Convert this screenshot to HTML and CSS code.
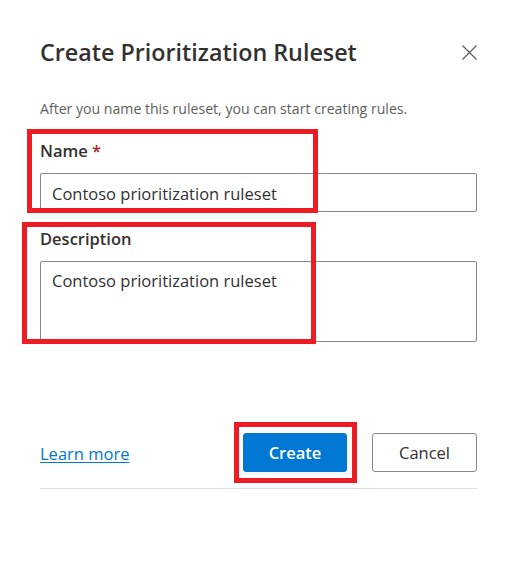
FILE: index.html
```html
<!DOCTYPE html>
<html lang="en">
<head>
<meta charset="utf-8">
<title>Create Prioritization Ruleset</title>
<link rel="stylesheet" href="styles.css">
</head>
<body>
<div class="dialog">
  <div class="head">
    <h1 class="title">Create Prioritization Ruleset</h1>
    <button class="close" aria-label="Close">
      <svg width="15" height="15" viewBox="0 0 15 15"><path d="M0.5 0.5 L14.5 14.5 M14.5 0.5 L0.5 14.5" stroke="#605e5c" stroke-width="1.3" fill="none"/></svg>
    </button>
  </div>
  <p class="sub">After you name this ruleset, you can start creating rules.</p>
  <div class="field">
    <div class="label">Name <span class="req">*</span></div>
    <div class="input">Contoso prioritization ruleset</div>
  </div>
  <div class="field field-desc">
    <div class="label">Description</div>
    <div class="input textarea">Contoso prioritization ruleset</div>
  </div>
  <div class="footer">
    <a class="link" href="#">Learn more</a>
    <div class="btns">
      <button class="btn primary">Create</button>
      <button class="btn secondary">Cancel</button>
    </div>
  </div>
  <div class="divider"></div>

  <div class="mark mark-name"></div>
  <div class="mark mark-desc"></div>
  <div class="mark mark-create"></div>
</div>
</body>
</html>
```

FILE: styles.css
```css
html, body {
  margin: 0;
  padding: 0;
  background: #ffffff;
}
body {
  font-family: "Open Sans", "Noto Sans", sans-serif;
  color: #323130;
}
.dialog {
  position: relative;
  width: 517px;
  min-height: 575px;
  box-sizing: border-box;
  padding: 33px 40px 0 40px;
}
.head {
  display: flex;
  align-items: center;
  justify-content: space-between;
  height: 38px;
}
.title {
  margin: 0;
  font-size: 23.3px;
  font-weight: 600;
  line-height: 38px;
  color: #323130;
}
.close {
  border: 0;
  background: none;
  padding: 0;
  width: 15px;
  height: 15px;
  display: flex;
}
.sub {
  margin: 28px 0 0 0;
  font-size: 14.1px;
  line-height: 20px;
  color: #605e5c;
}
.field {
  display: flex;
  flex-direction: column;
}
.label {
  font-size: 16.5px;
  font-weight: 600;
  line-height: 24px;
  margin-top: 20px;
  margin-bottom: 10px;
  color: #323130;
}
.field-desc .label {
  margin-top: 15px;
}
.req {
  color: #a4262c;
}
.input {
  height: 39px;
  box-sizing: border-box;
  border: 1px solid #8a8886;
  border-radius: 2px;
  padding: 2px 11px 0 11px;
  font-size: 16.5px;
  line-height: 35px;
  color: #323130;
}
.textarea {
  height: 81px;
  line-height: 24px;
  padding-top: 7px;
}
.footer {
  display: flex;
  align-items: center;
  justify-content: space-between;
  margin-top: 91px;
}
.link {
  font-size: 16.5px;
  color: #0078d4;
  text-decoration: underline;
  text-underline-offset: 2px;
  padding-top: 2px;
}
.btns {
  display: flex;
  gap: 25px;
}
.btn {
  height: 39px;
  box-sizing: border-box;
  font-family: inherit;
  font-size: 16.5px;
  font-weight: 600;
  border-radius: 3px;
  padding: 0 10px;
}
.primary {
  width: 104px;
  background: #0078d4;
  border: 1px solid #0078d4;
  color: #ffffff;
}
.secondary {
  width: 105px;
  background: #ffffff;
  border: 1px solid #8a8886;
  color: #323130;
  font-weight: 400;
}
.divider {
  margin-top: 16px;
  height: 1px;
  background: #e1dfdd;
}
.mark {
  position: absolute;
  box-sizing: border-box;
  border: 5px solid #ed1c24;
}
.mark-name {
  left: 27px;
  top: 129px;
  width: 291px;
  height: 84px;
}
.mark-desc {
  left: 22px;
  top: 222px;
  width: 294px;
  height: 122px;
}
.mark-create {
  left: 234px;
  top: 422px;
  width: 123px;
  height: 61px;
}
```
